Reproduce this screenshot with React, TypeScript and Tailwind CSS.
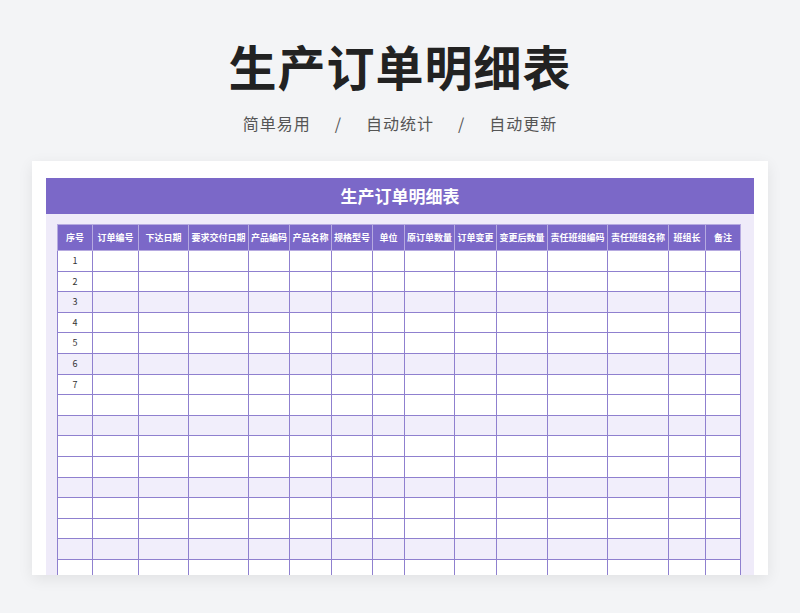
const COLS = [
  { t: '序号', w: 35 },
  { t: '订单编号', w: 46 },
  { t: '下达日期', w: 50 },
  { t: '要求交付日期', w: 60 },
  { t: '产品编码', w: 41 },
  { t: '产品名称', w: 42 },
  { t: '规格型号', w: 41 },
  { t: '单位', w: 32 },
  { t: '原订单数量', w: 50 },
  { t: '订单变更', w: 42 },
  { t: '变更后数量', w: 51 },
  { t: '责任班组编码', w: 60 },
  { t: '责任班组名称', w: 61 },
  { t: '班组长', w: 37 },
  { t: '备注', w: 35 },
];

const ROWS = Array.from({ length: 17 }, (_, i) => i);

export default function App() {
  return (
    <div
      className="w-[800px] h-[613px] overflow-hidden bg-[#f3f4f6] flex flex-col items-center"
      style={{ fontFamily: '"Noto Sans CJK SC", "Noto Sans", sans-serif' }}
    >
      <h1 className="mt-[30px] h-[70px] text-[48px] leading-[70px] font-bold text-[#222] tracking-[1px]">
        生产订单明细表
      </h1>
      <p className="mt-[10px] text-[16px] leading-[26px] text-[#555] tracking-[1px] flex gap-[24px]">
        <span>简单易用</span>
        <span>/</span>
        <span>自动统计</span>
        <span>/</span>
        <span>自动更新</span>
      </p>
      <div className="mt-[25px] w-[736px] h-[414px] overflow-hidden bg-white shadow-[0_4px_14px_rgba(0,0,0,0.08)] pt-[17px] px-[14px]">
        <div className="h-[36px] bg-[#7b68c8] text-white text-[17px] font-bold flex items-center justify-center">
          生产订单明细表
        </div>
        <div className="bg-[#efebf9] h-full pt-[10px] px-[11px]">
          <table className="border-collapse table-fixed text-[9px]">
            <thead>
              <tr className="h-[26px] bg-[#7b68c8] text-white">
                {COLS.map((c) => (
                  <th key={c.t} style={{ width: c.w }} className="border border-[#b6aae0] font-bold p-0 whitespace-nowrap">
                    {c.t}
                  </th>
                ))}
              </tr>
            </thead>
            <tbody>
              {ROWS.map((r) => (
                <tr key={r} className={`h-[20.6px] ${r % 3 === 2 ? 'bg-[#f1eefb]' : 'bg-white'}`}>
                  {COLS.map((c, j) => (
                    <td key={c.t} className="border border-[#8f80cf] text-center text-[#333] p-0">
                      {j === 0 && r < 7 ? r + 1 : ''}
                    </td>
                  ))}
                </tr>
              ))}
            </tbody>
          </table>
        </div>
      </div>
    </div>
  );
}
